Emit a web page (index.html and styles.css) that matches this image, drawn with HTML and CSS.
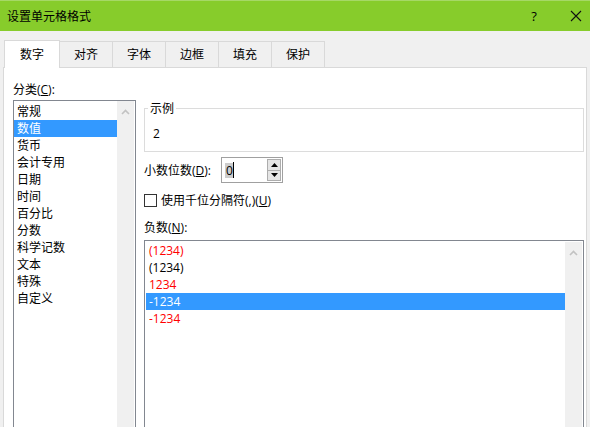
FILE: index.html
```html
<!DOCTYPE html>
<html lang="zh-CN">
<head>
<meta charset="utf-8">
<title>设置单元格格式</title>
<link rel="stylesheet" href="styles.css">
</head>
<body>
<div class="dialog">
  <div class="titlebar">
    <span class="title">设置单元格格式</span>
    <span class="help">?</span>
    <span class="close"><svg width="12" height="12" viewBox="0 0 12 12"><path d="M1 1L11 11M11 1L1 11" stroke="#111" stroke-width="1.1" fill="none"/></svg></span>
  </div>
  <div class="tabs">
    <div class="tab active">数字</div>
    <div class="tab">对齐</div>
    <div class="tab">字体</div>
    <div class="tab">边框</div>
    <div class="tab">填充</div>
    <div class="tab">保护</div>
  </div>
  <div class="panel">
    <div class="left">
      <div class="label">分类(<u>C</u>):</div>
      <div class="listbox cat">
        <ul class="items">
          <li>常规</li>
          <li class="sel">数值</li>
          <li>货币</li>
          <li>会计专用</li>
          <li>日期</li>
          <li>时间</li>
          <li>百分比</li>
          <li>分数</li>
          <li>科学记数</li>
          <li>文本</li>
          <li>特殊</li>
          <li>自定义</li>
        </ul>
        <div class="vscroll"><svg width="9" height="6" viewBox="0 0 9 6"><path d="M1 5L4.5 1.5L8 5" stroke="#c2c2c2" stroke-width="1.6" fill="none"/></svg></div>
      </div>
    </div>
    <div class="right">
      <fieldset class="sample">
        <legend>示例</legend>
        <div class="sample-val">2</div>
      </fieldset>
      <div class="decimals">
        <span>小数位数(<u>D</u>):</span>
        <div class="spin">
          <div class="spin-text"><span class="seltext">0</span><span class="caret"></span></div>
          <div class="spin-btns">
            <div class="sbtn"><svg width="7" height="4" viewBox="0 0 7 4"><path d="M0 4L3.5 0L7 4Z" fill="#000"/></svg></div>
            <div class="sbtn"><svg width="7" height="4" viewBox="0 0 7 4"><path d="M0 0L3.5 4L7 0Z" fill="#000"/></svg></div>
          </div>
        </div>
      </div>
      <div class="check"><span class="box"></span><span>使用千位分隔符(,)(<u>U</u>)</span></div>
      <div class="label neg-label">负数(<u>N</u>):</div>
      <div class="listbox neg">
        <ul class="items">
          <li class="red">(1234)</li>
          <li>(1234)</li>
          <li class="red">1234</li>
          <li class="sel">-1234</li>
          <li class="red">-1234</li>
        </ul>
        <div class="vscroll"><svg width="9" height="6" viewBox="0 0 9 6"><path d="M1 5L4.5 1.5L8 5" stroke="#c2c2c2" stroke-width="1.6" fill="none"/></svg></div>
      </div>
    </div>
  </div>
</div>
</body>
</html>
```
FILE: styles.css
```css
* { box-sizing: border-box; }
html, body {
  margin: 0;
  padding: 0;
  width: 590px;
  height: 427px;
  overflow: hidden;
  background: #f0f0f0;
  font-family: "Open Sans", "Noto Sans CJK SC", sans-serif;
  font-size: 12px;
  color: #000;
}
.dialog {
  display: flex;
  flex-direction: column;
  height: 427px;
}
.titlebar {
  height: 31px;
  background: #87cc2b;
  border-top: 1px solid #a6d866;
  display: flex;
  align-items: center;
  padding-left: 7px;
  flex: none;
}
.title { flex: 1; line-height: 17px; }
.help {
  width: 20px;
  text-align: center;
  margin-right: 26px;
  font-size: 13px;
}
.close {
  width: 12px;
  height: 12px;
  margin-right: 8px;
  display: flex;
}
.tabs {
  height: 36px;
  display: flex;
  align-items: flex-end;
  padding-left: 4px;
  flex: none;
}
.tab {
  height: 26px;
  width: 53px;
  border: 1px solid #d9d9d9;
  border-left: none;
  border-bottom: none;
  background: #f0f0f0;
  display: flex;
  align-items: center;
  justify-content: center;
  line-height: 17px;
}
.tab.active {
  width: 56px;
  height: 28px;
  margin-bottom: -1px;
  border-left: 1px solid #d9d9d9;
  background: #fff;
  position: relative;
  z-index: 1;
  padding-bottom: 1px;
}
.panel {
  flex: 1;
  margin: 0 3px 0 3px;
  background: #fff;
  border: 1px solid #d9d9d9;
  border-bottom: none;
  display: flex;
  overflow: hidden;
}
.left {
  padding: 13px 0 0 9px;
  width: 140px;
  flex: none;
}
.label { line-height: 17px; height: 17px; }
u { text-decoration: underline; text-underline-offset: 1px; }
.listbox {
  border: 1px solid #828790;
  display: flex;
  background: #fff;
}
.listbox.cat {
  margin-top: 2px;
  width: 123px;
  height: 340px;
  padding: 0 1px 0 0;
}
.items {
  list-style: none;
  margin: 0;
  padding: 0;
  flex: 1;
}
.cat .items { padding-top: 2px; }
.items li {
  height: 17px;
  line-height: 17px;
  padding-left: 3px;
  white-space: nowrap;
}
.items li.sel { background: #3399ff; color: #fff; }
.items li.red { color: #ff0000; }
.vscroll {
  width: 17px;
  background: #f0f0f0;
  display: flex;
  justify-content: center;
  padding-top: 8px;
  flex: none;
}
.cat .vscroll { margin-top: 0; }
.right {
  width: 440px;
  padding-top: 32px;
  flex: none;
}
.sample {
  margin: 0;
  border: 1px solid #dcdcdc;
  padding: 0 0 6px 3px;
  height: 52px;
}
.sample legend {
  padding: 0 2px;
  line-height: 17px;
  margin-left: 0;
}
.sample-val {
  padding-left: 5px;
  padding-top: 8px;
  line-height: 17px;
}
.decimals {
  display: flex;
  align-items: center;
  margin-top: 5px;
  height: 26px;
}
.decimals > span { width: 77px; line-height: 17px; }
.spin {
  width: 62px;
  height: 26px;
  border: 1px solid #a0a0a0;
  display: flex;
  padding: 1px 1px 1px 3px;
}
.spin-text {
  flex: 1;
  display: flex;
  align-items: center;
}
.seltext {
  background: #cccccc;
  line-height: 15px;
  padding: 0 0 0 1px;
}
.caret {
  width: 1px;
  height: 16px;
  background: #000;
}
.spin-btns {
  width: 14px;
  display: flex;
  flex-direction: column;
  gap: 0;
}
.sbtn {
  flex: 1;
  border: 1px solid #adadad;
  background: #e5e5e5;
  display: flex;
  align-items: center;
  justify-content: center;
}
.sbtn + .sbtn { border-top: none; }
.check {
  display: flex;
  align-items: center;
  margin-top: 9px;
  height: 17px;
  line-height: 17px;
}
.box {
  width: 13px;
  height: 13px;
  border: 1px solid #333;
  margin-right: 4px;
  background: #fff;
}
.neg-label { margin-top: 10px; }
.listbox.neg {
  margin-top: 4px;
  width: 440px;
  height: 200px;
  padding: 1px 1px 0 1px;
}
```
